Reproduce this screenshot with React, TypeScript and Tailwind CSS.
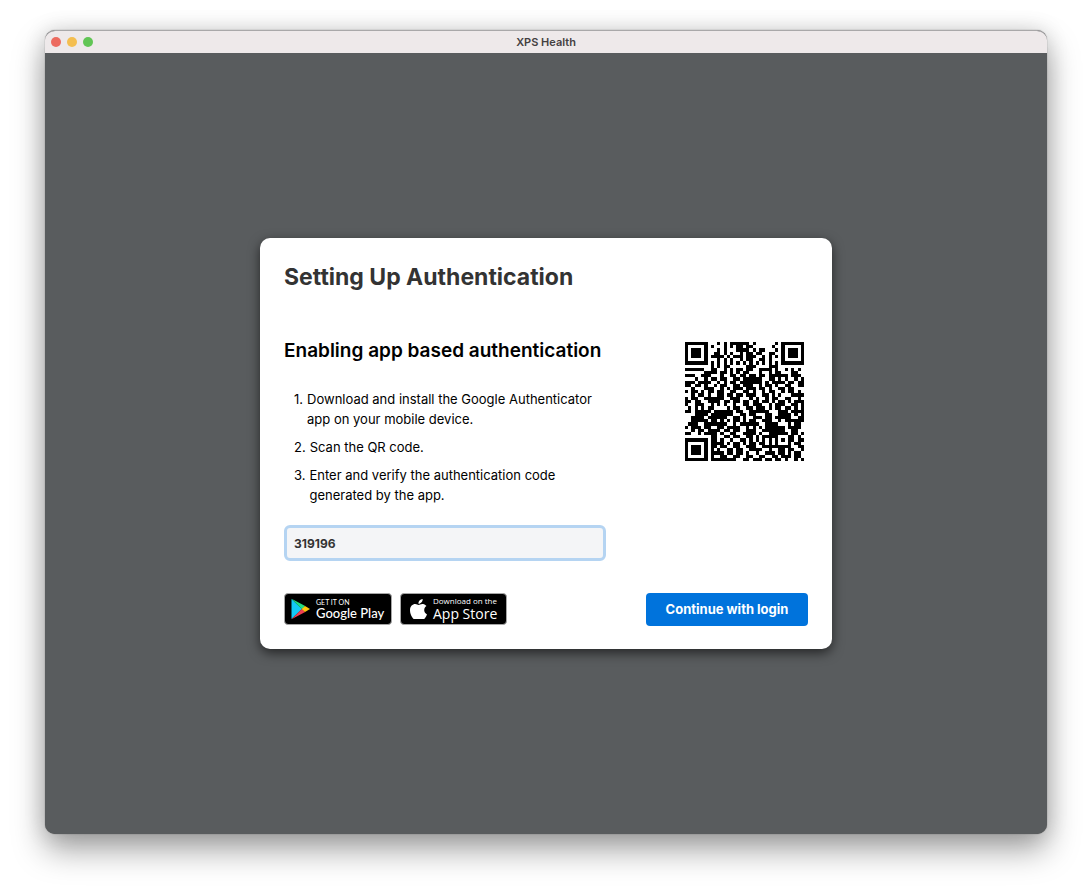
import { useState } from "react";

// Illustrative module grid: the finder, timing and alignment marks are regular, the data area is a placeholder.
const QR_ROWS = [
  "#######...#.#.######.#......#.#######",
  "#.....#.#...#.#.##.##......#..#.....#",
  "#.###.#...#.#...####.#.##...#.#.###.#",
  "#.###.#..##.#.#..#.##.##..##..#.###.#",
  "#.###.#.####.#.###.###..#.#.#.#.###.#",
  "#.....#...#.#.#..#.##..##.#...#.....#",
  "#######.#.#.#.#.#.#.#.#.#.#.#.#######",
  "........#.#.##.....###....###........",
  "######..##..#.#.##.##..####.#..#.#.#.",
  "......####.##.#.#.##...#..#.##...##..",
  "###..###...#..##.##.##.##.######.###.",
  "...#..#.##.##..##.######..##.#.#..#.#",
  "###.####..#.#.##.#######.#.####.##.##",
  "##.##.#..#.##..##.###..#.##.#..##..##",
  "..#...###..#.#.###.###.##.#..##.##...",
  "#.##.#.##.##..##..##.#..#.##..#.##.#.",
  "..#.##.#..##.##.##.###..##.#.#...####",
  "#.##..######..###...#.#..#.##..##..#.",
  "##.##..####.##.##.##.##.##.#.##.#.###",
  "#..###..#.#.#..#..##.###..#.###..##.#",
  ".#.#.#.##....#.##..##.###.#.##.##.#.#",
  "##.#####.######.##..######...###.####",
  "...####.#######..##.##...##..####.#.#",
  "..####.######..##.#..###.##.#####..##",
  "..#####.##.#.#.##.#.##..###..#.######",
  ".###..#######..#.######..####...#.##.",
  "#.###.##..##.####..#.#.#.######.####.",
  "..#.##.####.##.##..###..#######..##..",
  "##..#.####.#..##..####.#..######.##.#",
  "........##..##.##..##.#.#####...##.#.",
  "#######.##.#..#..##.#.#.#.#.#.#.##.##",
  "#.....#.####.#.##.#.##.##.#.#...#.##.",
  "#.###.#.##.##..##..###..#########..##",
  "#.###.#.#.#..##.##..####..#..##.##..#",
  "#.###.#.####.##.##.#..#..###.##.#.##.",
  "#.....#.#..##..##..##..##..##.###.##.",
  "#######.########..##.###.##.##.#..#.#",
];

function QrCode() {
  const size = QR_ROWS.length;
  const path = QR_ROWS.map((row, y) =>
    [...row].map((cell, x) => (cell === "#" ? `M${x} ${y}h1v1h-1z` : "")).join("")
  ).join("");
  return (
    <svg viewBox={`0 0 ${size} ${size}`} className="w-[119px]" role="img" aria-label="Authenticator QR code" shapeRendering="crispEdges">
      <path d={path} />
    </svg>
  );
}

function PlayLogo() {
  return (
    <svg viewBox="0 0 19 22" className="w-[19px] shrink-0" aria-hidden="true">
      <path d="M.5 1v20L11 11z" fill="#12c9f5" />
      <path d="M.5.8 14.200 8 11 11.200z" fill="#22dc82" />
      <path d="M.5 21.200 14.200 14 11 10.800z" fill="#ef4050" />
      <path d="M14 7.900l5 3.100-5 3.100-3.300-3.100z" fill="#fec60a" />
    </svg>
  );
}

function AppleLogo() {
  return (
    <svg viewBox="0 0 814 1000" className="w-[17px] shrink-0" fill="#fff" aria-hidden="true">
      <path d="M788.1 340.9c-5.800 4.500-108.200 62.200-108.200 190.500 0 148.400 130.300 200.900 134.200 202.200-.6 3.200-20.700 71.900-68.700 141.900-42.800 61.600-87.500 123.100-155.500 123.100s-85.500-39.500-164-39.500c-76.500 0-103.700 40.800-165.900 40.800s-105.600-57-155.500-127C46.700 790.700 0 663 0 541.800c0-194.400 126.400-297.500 250.800-297.500 66.100 0 121.200 43.400 162.700 43.400 39.500 0 101.100-46 176.300-46 28.500 0 130.900 2.600 198.300 99.200zm-234-181.500c31.100-36.900 53.100-88.100 53.100-139.300 0-7.100-.6-14.300-1.900-20.100-50.600 1.900-110.800 33.700-147.100 75.800-28.500 32.400-55.100 83.600-55.100 135.500 0 7.800 1.300 15.600 1.900 18.100 3.200.6 8.400 1.300 13.600 1.300 45.400 0 102.500-30.400 135.500-71.300z" />
    </svg>
  );
}

export default function App() {
  const [code, setCode] = useState("319196");

  return (
    <div className="flex min-h-screen flex-col bg-white px-[45px] pt-[30px] pb-[59px] font-['Inter',sans-serif]">
      <div className="flex flex-1 flex-col overflow-hidden rounded-[10px] border-t border-[#a9a8a9] bg-[#595c5e] shadow-[0_0_1px_rgba(0,0,0,0.6),0_16px_32px_rgba(0,0,0,0.36),0_0_22px_rgba(0,0,0,0.14)]">
        <header className="relative flex h-[22px] items-center justify-center bg-[#eee9ea]">
          <div className="absolute left-[6px] flex gap-[6px]">
            <button aria-label="Close" className="size-[10px] rounded-full bg-[#ec6a5f]" />
            <button aria-label="Minimize" className="size-[10px] rounded-full bg-[#f4be50]" />
            <button aria-label="Zoom" className="size-[10px] rounded-full bg-[#61c555]" />
          </div>
          <span className="text-[11px] leading-5 font-semibold text-[#444041]">XPS Health</span>
        </header>
        <main className="flex flex-1 items-center justify-center">
          <section className="w-full max-w-[572px] rounded-[10px] bg-white px-6 pt-6 pb-[23px] shadow-[0_4px_12px_rgba(0,0,0,0.6)]">
            <h1 className="text-[23px] leading-[30px] font-bold text-[#333]">Setting Up Authentication</h1>
            <div className="mt-[46px] flex justify-between">
              <div className="w-[322px]">
                <h2 className="text-[19px] leading-[26px] font-semibold whitespace-nowrap text-black">Enabling app based authentication</h2>
                <ol className="mt-[25px] flex flex-col gap-2 pl-[10px] text-[13px] leading-5 text-black">
                  <li className="flex gap-1"><span>1.</span><span>Download and install the Google Authenticator app on your mobile device.</span></li>
                  <li className="flex gap-1"><span>2.</span><span>Scan the QR code.</span></li>
                  <li className="flex gap-1"><span>3.</span><span>Enter and verify the authentication code generated by the app.</span></li>
                </ol>
                <input
                  aria-label="Authentication code"
                  value={code}
                  onChange={(event) => setCode(event.target.value)}
                  className="mt-5 block h-9 w-full rounded-[6px] border-[3px] border-[#b5d4f2] bg-[#f4f5f7] px-[7px] text-[12px] font-bold text-[#333] outline-none"
                />
              </div>
              <div className="pt-1 pr-1"><QrCode /></div>
            </div>
            <footer className="mt-8 flex items-start justify-between">
              <div className="flex gap-2">
                <a href="#google-play" className="flex h-8 w-[108px] items-center gap-[6px] rounded-[4px] border border-[#a6a6a6] bg-black pl-[6px] text-white">
                  <PlayLogo />
                  <span className="flex flex-col whitespace-nowrap font-['Lato',sans-serif]">
                    <span className="text-[7px] leading-[8px]">GET IT ON</span>
                    <span className="text-[13px] leading-[15px] font-medium">Google Play</span>
                  </span>
                </a>
                <a href="#app-store" className="flex h-8 w-[107px] items-center gap-[6px] rounded-[4px] border border-[#a6a6a6] bg-black pl-[9px] text-white">
                  <AppleLogo />
                  <span className="flex flex-col whitespace-nowrap font-['Open_Sans',sans-serif]">
                    <span className="text-[8px] leading-[9px]">Download on the</span>
                    <span className="text-[14px] leading-[17px] font-medium">App Store</span>
                  </span>
                </a>
              </div>
              <button className="h-[33px] w-[162px] rounded-[4px] bg-[#0073dc] text-[13px] font-bold text-white">Continue with login</button>
            </footer>
          </section>
        </main>
      </div>
    </div>
  );
}
